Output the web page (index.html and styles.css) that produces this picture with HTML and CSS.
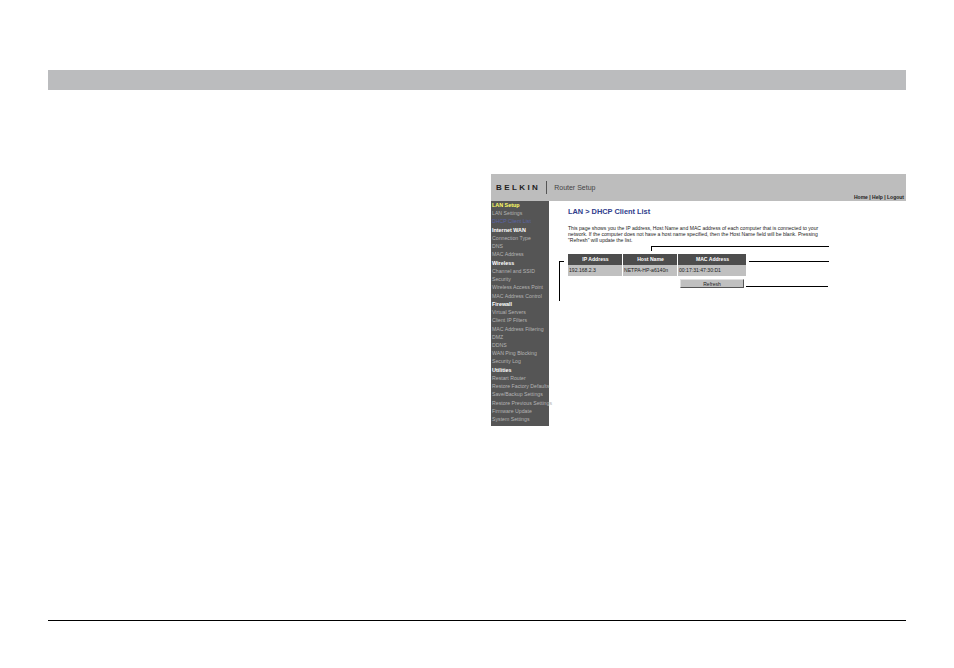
FILE: index.html
```html
<!DOCTYPE html>
<html lang="en">
<head>
    <meta charset="UTF-8">
    <meta name="viewport" content="width=device-width, initial-scale=1.0">
    <title>LAN - DHCP Client List</title>
    <link rel="stylesheet" href="styles.css">
</head>
<body>
    <div class="page-band"></div>

    <div class="figure">
        <div class="router">
            <div class="router-top">
                <div class="brand">BELKIN</div>
                <div class="brand-title">Router Setup</div>
                <div class="top-links">Home | Help | Logout</div>
            </div>
            <div class="router-body">
                <div class="side">
                    <div class="side-head current">LAN Setup</div>
                    <div class="side-item">LAN Settings</div>
                    <div class="side-item selected">DHCP Client List</div>
                    <div class="side-head">Internet WAN</div>
                    <div class="side-item">Connection Type</div>
                    <div class="side-item">DNS</div>
                    <div class="side-item">MAC Address</div>
                    <div class="side-head">Wireless</div>
                    <div class="side-item">Channel and SSID</div>
                    <div class="side-item">Security</div>
                    <div class="side-item">Wireless Access Point</div>
                    <div class="side-item">MAC Address Control</div>
                    <div class="side-head">Firewall</div>
                    <div class="side-item">Virtual Servers</div>
                    <div class="side-item">Client IP Filters</div>
                    <div class="side-item">MAC Address Filtering</div>
                    <div class="side-item">DMZ</div>
                    <div class="side-item">DDNS</div>
                    <div class="side-item">WAN Ping Blocking</div>
                    <div class="side-item">Security Log</div>
                    <div class="side-head">Utilities</div>
                    <div class="side-item">Restart Router</div>
                    <div class="side-item">Restore Factory Defaults</div>
                    <div class="side-item">Save/Backup Settings</div>
                    <div class="side-item">Restore Previous Settings</div>
                    <div class="side-item">Firmware Update</div>
                    <div class="side-item">System Settings</div>
                </div>
                <div class="main">
                    <h1>LAN &gt; DHCP Client List</h1>
                    <p>This page shows you the IP address, Host Name and MAC address of each computer that is connected to your network. If the computer does not have a host name specified, then the Host Name field will be blank. Pressing "Refresh" will update the list.</p>
                    <div class="clients">
                        <div class="cell head">IP Address</div>
                        <div class="cell head">Host Name</div>
                        <div class="cell head">MAC Address</div>
                        <div class="cell">192.168.2.3</div>
                        <div class="cell">NETPA-HP-a6140n</div>
                        <div class="cell">00:17:31:47:30:D1</div>
                    </div>
                    <div class="actions">
                        <button class="refresh">Refresh</button>
                    </div>
                </div>
            </div>

            <!-- callout lines laid over the screenshot -->
            <div class="callout host"></div>
            <div class="callout mac"></div>
            <div class="callout btn"></div>
            <div class="callout list"></div>
        </div>
    </div>

    <div class="page-foot"></div>
</body>
</html>
```

FILE: styles.css
```css
* {
    margin: 0;
    padding: 0;
    box-sizing: border-box;
}

html, body {
    height: 100%;
    overflow: hidden;
}

body {
    background: #ffffff;
    font-family: "Liberation Sans", Arial, sans-serif;
    color: #222222;
    padding: 70px 48px 0;
    display: flex;
    flex-direction: column;
}

.page-band {
    height: 20px;
    background: #bbbcbe;
}

.figure {
    display: flex;
    justify-content: flex-end;
    padding-top: 84px;
    height: 530px;
}

.router {
    position: relative;
    width: 415px;
    height: 252px;
}

.router-top {
    height: 27px;
    background: #bdbdbd;
    display: flex;
    align-items: center;
    position: relative;
    padding-left: 5px;
}

.brand {
    font-size: 8px;
    font-weight: bold;
    letter-spacing: 2.4px;
    color: #222222;
    padding-right: 6px;
    margin-right: 7px;
    border-right: 1px solid #555555;
    line-height: 13px;
}

.brand-title {
    font-size: 7px;
    color: #444444;
}

.top-links {
    position: absolute;
    right: 2px;
    bottom: 1px;
    font-size: 5px;
    font-weight: bold;
    color: #222222;
}

.router-body {
    display: flex;
    height: 225px;
}

.side {
    width: 58px;
    background: #555555;
    padding-left: 1px;
}

.side-item,
.side-head {
    height: 8.24px;
    line-height: 8.24px;
    font-size: 5.2px;
    white-space: nowrap;
    color: #b4b4b4;
}

.side-head {
    font-weight: bold;
    font-size: 5.4px;
    color: #ffffff;
}

.side-head.current {
    color: #ffff66;
}

.side-item.selected {
    color: #5a64a8;
}

.main {
    flex: 1;
    padding: 6px 0 0 19px;
}

h1 {
    font-size: 7.4px;
    line-height: 9px;
    font-weight: bold;
    color: #2f3d8c;
    margin-bottom: 9px;
}

p {
    width: 262px;
    font-size: 5.1px;
    line-height: 6.1px;
    color: #222222;
}

.clients {
    display: grid;
    grid-template-columns: 54px 54px 68px;
    column-gap: 1px;
    width: 178px;
    margin-top: 11px;
}

.cell {
    height: 11px;
    line-height: 11px;
    font-size: 5.1px;
    background: #c0c0c0;
    padding-left: 1px;
    white-space: nowrap;
}

.cell.head {
    background: #4d4d4d;
    color: #ffffff;
    font-weight: bold;
    text-align: center;
}

.actions {
    width: 178px;
    padding: 3px 2px 0 0;
    display: flex;
    justify-content: flex-end;
}

.refresh {
    width: 64px;
    height: 9px;
    font-family: inherit;
    font-size: 5px;
    color: #222222;
    background: #c0c0c0;
    border: 1px solid;
    border-color: #e0e0e0 #555555 #555555 #e0e0e0;
}

.callout {
    position: absolute;
    border: 0 solid #000000;
}

.callout.host {
    left: 160px;
    top: 72px;
    width: 178px;
    height: 5px;
    border-top-width: 1px;
    border-left-width: 1px;
}

.callout.mac {
    left: 258px;
    top: 87px;
    width: 80px;
    border-top-width: 1px;
}

.callout.btn {
    left: 255px;
    top: 112px;
    width: 82px;
    border-top-width: 1px;
}

.callout.list {
    left: 68px;
    top: 87px;
    width: 5px;
    height: 40px;
    border-top-width: 1px;
    border-left-width: 1px;
}

.page-foot {
    border-top: 1px solid #000000;
}
```
